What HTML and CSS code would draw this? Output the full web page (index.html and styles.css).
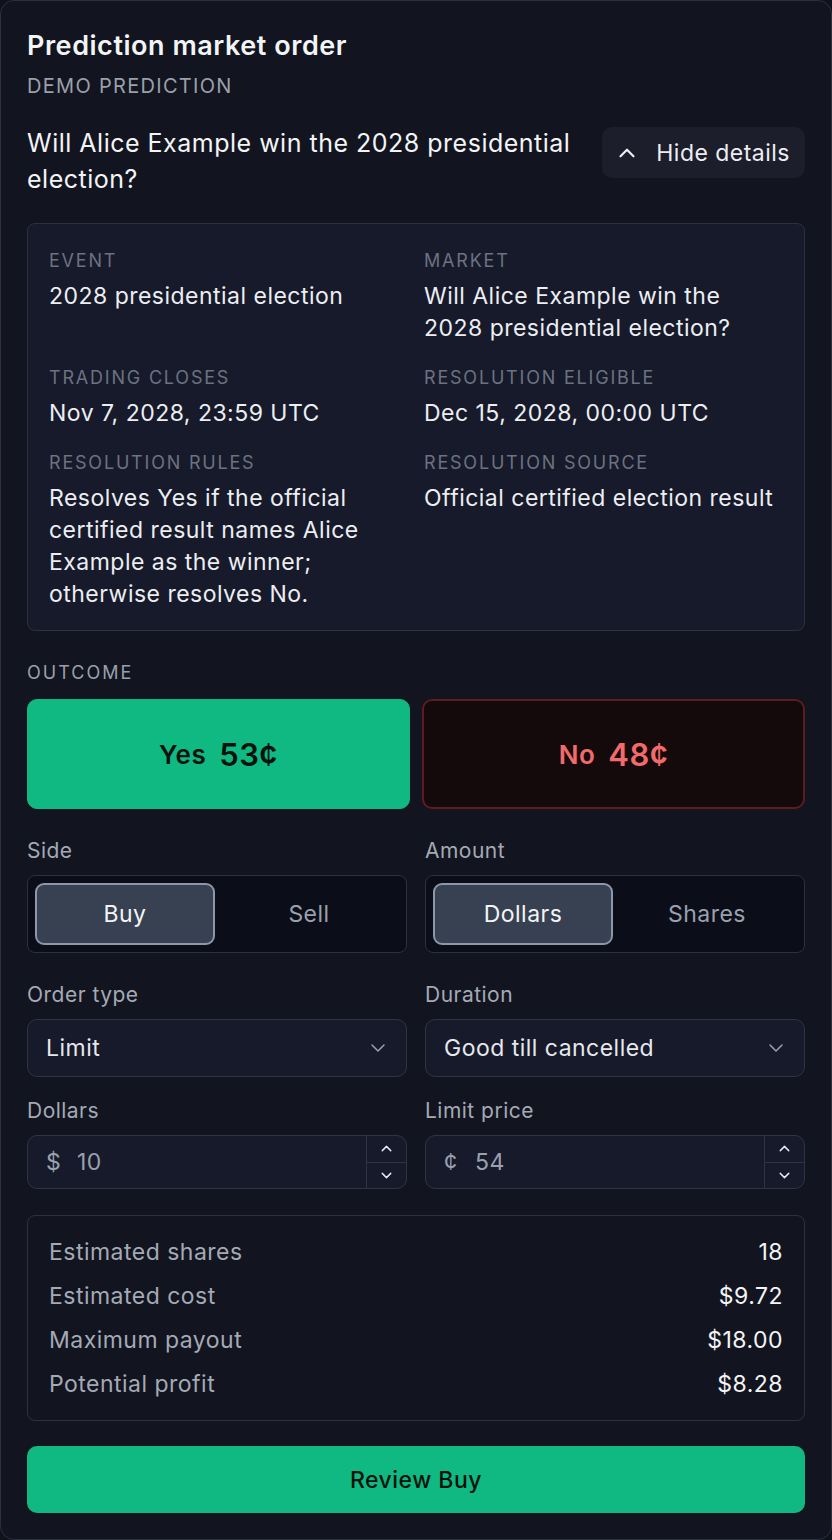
FILE: index.html
```html
<!DOCTYPE html>
<html lang="en">

<head>
    <meta charset="utf-8" />
    <meta name="viewport" content="width=device-width, initial-scale=1.0" />
    <title>Prediction market order</title>
    <link rel="stylesheet" href="styles.css">
</head>

<body>
    <div class="card">
        <h1 class="title">Prediction market order</h1>
        <div class="subtitle">DEMO PREDICTION</div>

        <div class="question-row">
            <p class="question">Will Alice Example win the 2028 presidential election?</p>
            <button class="btn-details" type="button">
                <svg class="icon" viewBox="0 0 24 24" width="26" height="26"><polyline points="6 15 12 9 18 15" /></svg>
                Hide details
            </button>
        </div>

        <!-- market details -->
        <div class="details">
            <div class="detail-item">
                <div class="detail-label">Event</div>
                <div class="detail-value">2028 presidential election</div>
            </div>
            <div class="detail-item">
                <div class="detail-label">Market</div>
                <div class="detail-value">Will Alice Example win the 2028 presidential election?</div>
            </div>
            <div class="detail-item">
                <div class="detail-label">Trading closes</div>
                <div class="detail-value">Nov 7, 2028, 23:59 UTC</div>
            </div>
            <div class="detail-item">
                <div class="detail-label">Resolution eligible</div>
                <div class="detail-value">Dec 15, 2028, 00:00 UTC</div>
            </div>
            <div class="detail-item">
                <div class="detail-label">Resolution rules</div>
                <div class="detail-value">Resolves Yes if the official certified result names Alice Example as the winner; otherwise resolves No.</div>
            </div>
            <div class="detail-item">
                <div class="detail-label">Resolution source</div>
                <div class="detail-value">Official certified election result</div>
            </div>
        </div>

        <div class="section-label">Outcome</div>
        <div class="outcomes">
            <button class="outcome outcome-yes" type="button"><span>Yes</span><span class="price">53¢</span></button>
            <button class="outcome outcome-no" type="button"><span>No</span><span class="price">48¢</span></button>
        </div>

        <!-- order form -->
        <div class="form-row row-side">
            <div class="field">
                <div class="field-label">Side</div>
                <div class="segmented">
                    <button class="seg-btn active" type="button">Buy</button>
                    <button class="seg-btn" type="button">Sell</button>
                </div>
            </div>
            <div class="field">
                <div class="field-label">Amount</div>
                <div class="segmented">
                    <button class="seg-btn active" type="button">Dollars</button>
                    <button class="seg-btn" type="button">Shares</button>
                </div>
            </div>
        </div>

        <div class="form-row row-type">
            <div class="field">
                <div class="field-label">Order type</div>
                <div class="select">
                    <span>Limit</span>
                    <svg class="icon icon-muted" viewBox="0 0 24 24" width="24" height="24"><polyline points="6 9 12 15 18 9" /></svg>
                </div>
            </div>
            <div class="field">
                <div class="field-label">Duration</div>
                <div class="select">
                    <span>Good till cancelled</span>
                    <svg class="icon icon-muted" viewBox="0 0 24 24" width="24" height="24"><polyline points="6 9 12 15 18 9" /></svg>
                </div>
            </div>
        </div>

        <div class="form-row row-input">
            <div class="field">
                <div class="field-label">Dollars</div>
                <div class="number-input">
                    <span class="unit">$</span>
                    <span class="value">10</span>
                    <div class="spinner">
                        <span><svg class="icon" viewBox="0 0 24 24" width="17" height="17"><polyline points="6 15 12 9 18 15" /></svg></span>
                        <span><svg class="icon" viewBox="0 0 24 24" width="17" height="17"><polyline points="6 9 12 15 18 9" /></svg></span>
                    </div>
                </div>
            </div>
            <div class="field">
                <div class="field-label">Limit price</div>
                <div class="number-input">
                    <span class="unit">¢</span>
                    <span class="value">54</span>
                    <div class="spinner">
                        <span><svg class="icon" viewBox="0 0 24 24" width="17" height="17"><polyline points="6 15 12 9 18 15" /></svg></span>
                        <span><svg class="icon" viewBox="0 0 24 24" width="17" height="17"><polyline points="6 9 12 15 18 9" /></svg></span>
                    </div>
                </div>
            </div>
        </div>

        <!-- estimate -->
        <div class="summary">
            <div class="summary-row"><span>Estimated shares</span><span class="num">18</span></div>
            <div class="summary-row"><span>Estimated cost</span><span class="num">$9.72</span></div>
            <div class="summary-row"><span>Maximum payout</span><span class="num">$18.00</span></div>
            <div class="summary-row"><span>Potential profit</span><span class="num">$8.28</span></div>
        </div>

        <button class="btn-primary" type="button">Review Buy</button>
    </div>
</body>

</html>
```

FILE: styles.css
```css
* {
    box-sizing: border-box;
}
html,
body {
    margin: 0;
    background-color: #10121b;
}
body {
    font-family: Inter, "Noto Sans", "Liberation Sans", sans-serif;
    letter-spacing: 0.03em;
    color: #eceef2;
}
button {
    font-family: inherit;
    letter-spacing: inherit;
    cursor: pointer;
}
.icon {
    fill: none;
    stroke: currentColor;
    stroke-width: 2;
    stroke-linecap: round;
    stroke-linejoin: round;
}
.icon-muted {
    color: #9aa1ae;
    stroke-width: 1.5;
}
.card {
    width: 832px;
    height: 1540px;
    padding: 28px 26px;
    background-color: #12141f;
    border: 1px solid #2c303d;
    border-radius: 14px;
}
.title {
    margin: 0;
    font-size: 27px;
    line-height: 34px;
    font-weight: 600;
    letter-spacing: 0.02em;
    color: #f3f4f6;
}
.subtitle {
    margin-top: 10px;
    font-size: 20px;
    line-height: 26px;
    letter-spacing: 1.3px;
    color: #9aa0ac;
}
/* 问题 + 按钮 */
.question-row {
    display: flex;
    align-items: flex-start;
    justify-content: space-between;
    gap: 24px;
    margin-top: 26px;
}
.question {
    margin: 0;
    flex: 1;
    font-size: 25px;
    line-height: 36px;
    letter-spacing: 0.02em;
    color: #f3f4f6;
}
.btn-details {
    display: flex;
    align-items: center;
    gap: 16px;
    height: 51px;
    margin-top: 2px;
    padding: 0 15px 0 12px;
    font-size: 23px;
    color: #eceef2;
    background-color: #1c1f2b;
    border: none;
    border-radius: 10px;
    white-space: nowrap;
}
.details {
    display: grid;
    grid-template-columns: 1fr 1fr;
    column-gap: 16px;
    row-gap: 22px;
    margin-top: 26px;
    padding: 25px 21px 20px;
    background-color: #171a2a;
    border: 1px solid #2c3142;
    border-radius: 8px;
}
.detail-label {
    font-size: 18px;
    line-height: 24px;
    letter-spacing: 1.8px;
    text-transform: uppercase;
    color: #6b7281;
}
.detail-value {
    margin-top: 7px;
    font-size: 23px;
    line-height: 32px;
    color: #eceef2;
}
.section-label {
    margin-top: 30px;
    font-size: 18px;
    line-height: 24px;
    letter-spacing: 2px;
    text-transform: uppercase;
    color: #9aa0ac;
}
.outcomes {
    display: grid;
    grid-template-columns: 1fr 1fr;
    gap: 12px;
    margin-top: 14px;
}
.outcome {
    display: flex;
    align-items: center;
    justify-content: center;
    gap: 13px;
    height: 110px;
    font-size: 26px;
    font-weight: 600;
    border-radius: 10px;
}
.outcome .price {
    font-size: 31px;
}
.outcome-yes {
    color: #06120d;
    background-color: #10b981;
    border: 1px solid #10b981;
}
.outcome-no {
    color: #f26b6b;
    background-color: #140a0c;
    border: 2px solid #5f1b1d;
}
/* 表单 */
.form-row {
    display: grid;
    grid-template-columns: 1fr 1fr;
    column-gap: 18px;
}
.row-side {
    margin-top: 28px;
}
.row-type {
    margin-top: 28px;
}
.row-input {
    margin-top: 20px;
}
.field-label {
    font-size: 21px;
    line-height: 28px;
    color: #a4aab5;
}
.segmented {
    display: grid;
    grid-template-columns: 1fr 1fr;
    gap: 4px;
    height: 78px;
    margin-top: 10px;
    padding: 7px;
    background-color: #0b0d18;
    border: 1px solid #2c3142;
    border-radius: 8px;
}
.seg-btn {
    font-size: 23px;
    color: #9aa1ae;
    background: none;
    border: 2px solid transparent;
    border-radius: 9px;
}
.seg-btn.active {
    color: #f3f4f6;
    background-color: #374151;
    border-color: #8d97aa;
}
.select {
    display: flex;
    align-items: center;
    justify-content: space-between;
    height: 58px;
    margin-top: 10px;
    padding: 0 16px 0 18px;
    font-size: 23px;
    color: #e6e8ec;
    background-color: #171a2a;
    border: 1px solid #2f3444;
    border-radius: 10px;
}
.number-input {
    display: flex;
    align-items: center;
    height: 54px;
    margin-top: 10px;
    font-size: 23px;
    color: #9aa1ae;
    background-color: #171a2a;
    border: 1px solid #2f3444;
    border-radius: 10px;
    overflow: hidden;
}
.number-input .unit {
    width: 49px;
    padding-left: 18px;
}
.number-input .value {
    flex: 1;
}
.spinner {
    display: flex;
    flex-direction: column;
    width: 40px;
    height: 100%;
    border-left: 1px solid #2f3444;
    color: #e6e8ec;
}
.spinner span {
    flex: 1;
    display: flex;
    align-items: center;
    justify-content: center;
}
.spinner span + span {
    border-top: 1px solid #2f3444;
}
.summary {
    display: flex;
    flex-direction: column;
    gap: 12px;
    margin-top: 26px;
    padding: 20px 21px;
    border: 1px solid #2c3142;
    border-radius: 8px;
}
.summary-row {
    display: flex;
    justify-content: space-between;
    font-size: 23px;
    line-height: 32px;
    color: #a4aab5;
}
.summary-row .num {
    color: #f3f4f6;
}
.btn-primary {
    display: block;
    width: 100%;
    height: 67px;
    margin-top: 25px;
    font-size: 23px;
    font-weight: 500;
    color: #06120d;
    background-color: #10b981;
    border: none;
    border-radius: 10px;
}
```
